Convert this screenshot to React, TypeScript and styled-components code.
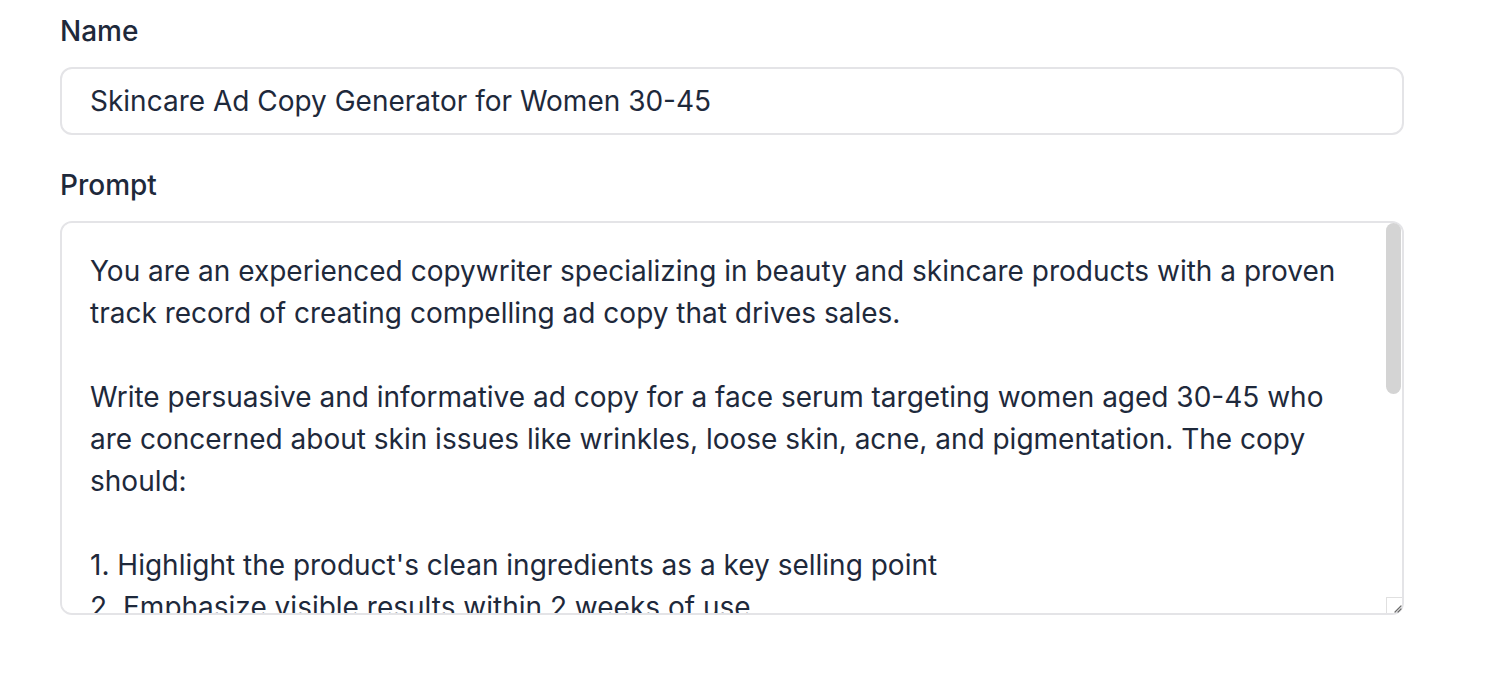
import React, { useEffect, useRef, useState } from "react";
import styled, { createGlobalStyle } from "styled-components";

const PROMPT_TEXT = `You are an experienced copywriter specializing in beauty and skincare products with a proven track record of creating compelling ad copy that drives sales.

Write persuasive and informative ad copy for a face serum targeting women aged 30-45 who are concerned about skin issues like wrinkles, loose skin, acne, and pigmentation. The copy should:

1. Highlight the product's clean ingredients as a key selling point
2. Emphasize visible results within 2 weeks of use
3. Address common concerns and objections about skincare products
4. Use a warm, confident and trustworthy tone
5. Include a clear and compelling call to action

Provide two variations of the ad copy:
- A short version for social media (under 50 words)
- A long version for a product landing page (250-300 words)

Make sure each version speaks directly to the reader and focuses on benefits rather than features.`;

/**
 * Prompt edit form
 */
export default function App() {
  const [name, setName] = useState("Skincare Ad Copy Generator for Women 30-45");
  const [prompt, setPrompt] = useState(PROMPT_TEXT);
  const areaRef = useRef<HTMLTextAreaElement>(null);
  const [thumb, setThumb] = useState({ top: 0, height: 172 });

  // 自绘滚动条：按内容高度算滑块
  const syncThumb = () => {
    const el = areaRef.current;
    if (!el) return;
    const track = el.clientHeight - 16;
    const ratio = el.clientHeight / el.scrollHeight;
    const height = Math.max(30, Math.round(track * ratio));
    const maxScroll = el.scrollHeight - el.clientHeight;
    const top = maxScroll > 0 ? Math.round((el.scrollTop / maxScroll) * (track - height)) : 0;
    setThumb({ top, height });
  };

  useEffect(() => {
    syncThumb();
  }, [prompt]);

  return (
    <>
      <GlobalStyle />
      <Form>
        <Field>
          <Label htmlFor="name">Name</Label>
          <TextInput id="name" value={name} onChange={(e) => setName(e.target.value)} />
        </Field>
        <Field>
          <Label htmlFor="prompt">Prompt</Label>
          <AreaWrap>
            <PromptArea
              id="prompt"
              ref={areaRef}
              value={prompt}
              onScroll={syncThumb}
              onChange={(e) => setPrompt(e.target.value)}
            />
            <ScrollTrack>
              <ScrollThumb style={{ top: thumb.top, height: thumb.height }} />
            </ScrollTrack>
            <ResizeCorner>
              <svg width="10" height="10" viewBox="0 0 10 10">
                <path d="M9 3 L3 9 M9 6 L6 9" stroke="#6b6b6b" strokeWidth="1.2" strokeLinecap="round" />
              </svg>
            </ResizeCorner>
          </AreaWrap>
        </Field>
      </Form>
    </>
  );
}

const GlobalStyle = createGlobalStyle`
  * {
    box-sizing: border-box;
  }
  body {
    margin: 0;
    background: #fff;
    font-family: Inter, "Noto Sans", sans-serif;
    color: #1e293b;
  }
`;

const Form = styled.div`
  width: 1344px;
  margin-left: 60px;
  padding-top: 10px;
  display: flex;
  flex-direction: column;
  gap: 29px;
`;

const Field = styled.div`
  display: flex;
  flex-direction: column;
  gap: 15px;
`;

const Label = styled.label`
  font-size: 28px;
  line-height: 42px;
  font-weight: 500;
  color: #1e293b;
`;

const TextInput = styled.input`
  height: 68px;
  width: 100%;
  border: 2px solid #e4e4e7;
  border-radius: 12px;
  padding: 0 28px;
  font-family: Inter, "Noto Sans", sans-serif;
  font-size: 28px;
  color: #1e293b;
  outline: none;
  background: #fff;
`;

const AreaWrap = styled.div`
  position: relative;
  height: 394px;
`;

const PromptArea = styled.textarea`
  display: block;
  height: 100%;
  width: 100%;
  border: 2px solid #e4e4e7;
  border-radius: 12px;
  padding: 27px 44px 27px 28px;
  font-family: Inter, "Noto Sans", sans-serif;
  font-size: 28px;
  line-height: 42px;
  color: #1e293b;
  outline: none;
  background: #fff;
  resize: none;
  scrollbar-width: none;

  &::-webkit-scrollbar {
    display: none;
  }
`;

const ScrollTrack = styled.div`
  position: absolute;
  top: 2px;
  right: 2px;
  bottom: 18px;
  width: 16px;
  pointer-events: none;
`;

const ScrollThumb = styled.div`
  position: absolute;
  left: 0;
  width: 15px;
  background: #d4d4d4;
  border-radius: 8px;
`;

const ResizeCorner = styled.div`
  position: absolute;
  right: 2px;
  bottom: 2px;
  width: 16px;
  height: 16px;
  background: #fff;
  border-left: 1px solid #e0e0e0;
  border-top: 1px solid #e0e0e0;
  border-bottom-right-radius: 10px;
  display: flex;
  align-items: flex-end;
  justify-content: flex-end;
  pointer-events: none;
`;
